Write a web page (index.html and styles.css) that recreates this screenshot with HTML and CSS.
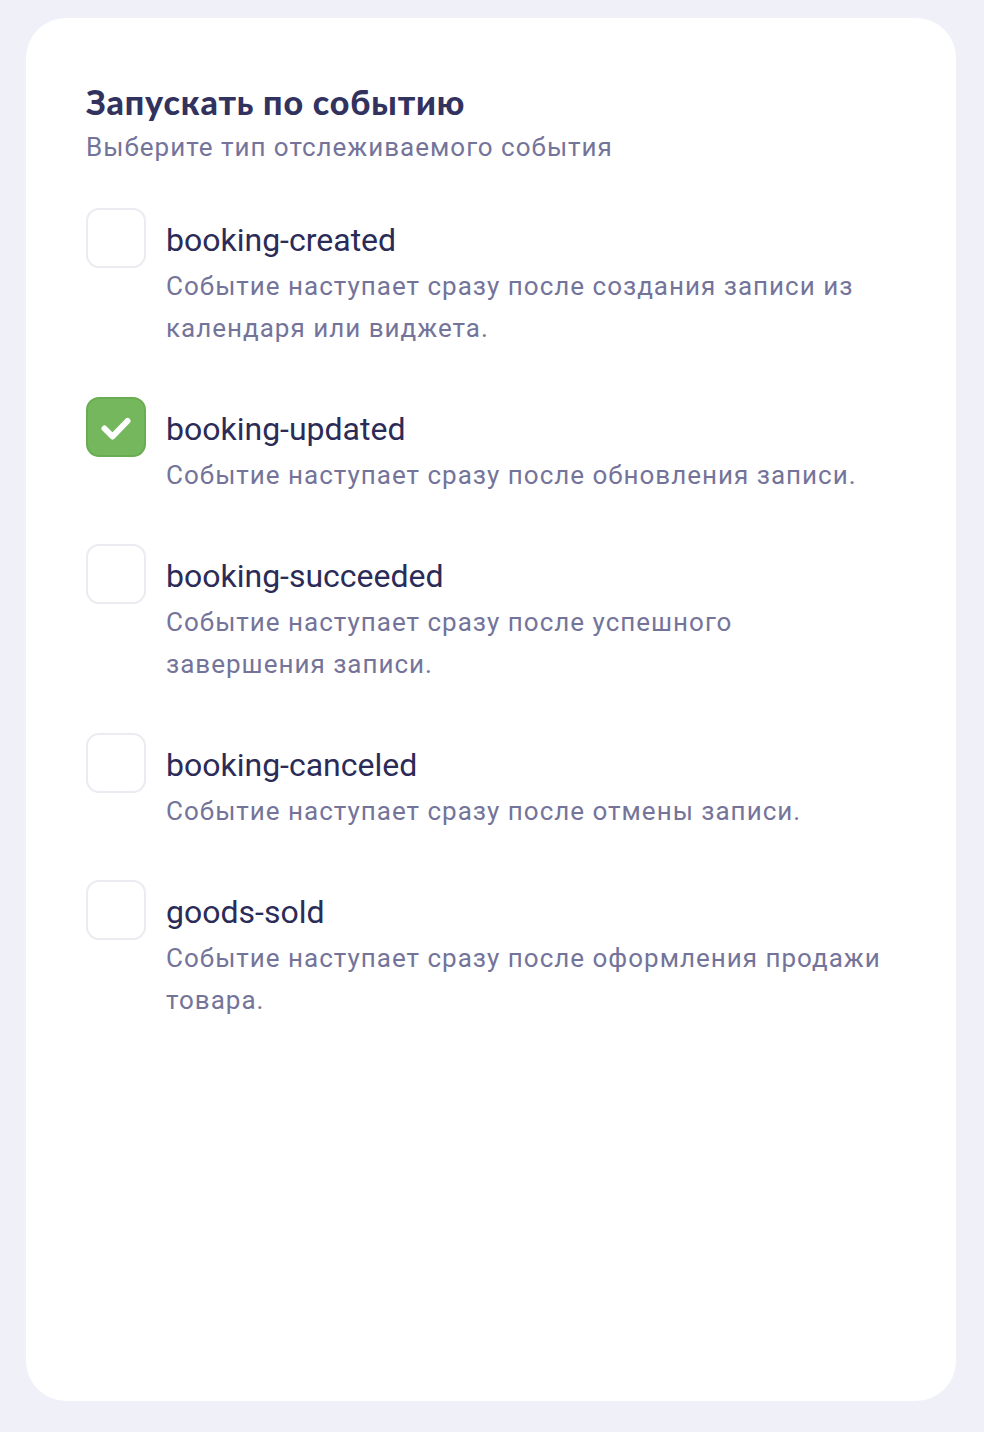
FILE: index.html
```html
<!DOCTYPE html>
<html lang="ru">
<head>
<meta charset="utf-8">
<link rel="stylesheet" href="styles.css">
</head>
<body>
<div class="page">
  <section class="card">
    <h1 class="title">Запускать по событию</h1>
    <p class="subtitle">Выберите тип отслеживаемого события</p>
    <ul class="events">
      <li class="event">
        <span class="box"></span>
        <div class="text">
          <div class="name">booking-created</div>
          <div class="desc">Событие наступает сразу после создания записи из календаря или виджета.</div>
        </div>
      </li>
      <li class="event">
        <span class="box checked">
          <svg viewBox="0 0 60 60" width="60" height="60"><path d="M18.5 31.5 L26.5 39.5 L41.5 24" fill="none" stroke="#fff" stroke-width="6" stroke-linecap="round" stroke-linejoin="round"/></svg>
        </span>
        <div class="text">
          <div class="name">booking-updated</div>
          <div class="desc">Событие наступает сразу после обновления записи.</div>
        </div>
      </li>
      <li class="event">
        <span class="box"></span>
        <div class="text">
          <div class="name">booking-succeeded</div>
          <div class="desc">Событие наступает сразу после успешного<br>завершения записи.</div>
        </div>
      </li>
      <li class="event">
        <span class="box"></span>
        <div class="text">
          <div class="name">booking-canceled</div>
          <div class="desc">Событие наступает сразу после отмены записи.</div>
        </div>
      </li>
      <li class="event">
        <span class="box"></span>
        <div class="text">
          <div class="name">goods-sold</div>
          <div class="desc">Событие наступает сразу после оформления продажи товара.</div>
        </div>
      </li>
    </ul>
  </section>
</div>
</body>
</html>
```
FILE: styles.css
```css
html, body {
  margin: 0;
  padding: 0;
  background: #f0f0f9;
}
.page {
  padding: 18px 28px 31px 26px;
  height: 1432px;
  box-sizing: border-box;
}
.card {
  background: #ffffff;
  border-radius: 40px;
  height: 100%;
  box-sizing: border-box;
  padding: 64px 60px 0 60px;
}
.title {
  margin: 0;
  font-family: "Lato", "Noto Sans", sans-serif;
  font-weight: 900;
  font-size: 34px;
  line-height: 40px;
  color: #32325f;
  letter-spacing: 0.85px;
}
.subtitle {
  margin: 8px 0 0 0;
  font-family: "Roboto", sans-serif;
  font-size: 26px;
  line-height: 34px;
  color: #74749a;
  letter-spacing: 1px;
}
.events {
  list-style: none;
  margin: 44px 0 0 0;
  padding: 0;
  display: flex;
  flex-direction: column;
  gap: 48px;
}
.event {
  display: flex;
  gap: 20px;
  align-items: flex-start;
}
.box {
  flex: none;
  width: 60px;
  height: 60px;
  box-sizing: border-box;
  border: 2px solid #ebebf2;
  border-radius: 13px;
  background: #fff;
  display: flex;
}
.box.checked {
  background: #74b75c;
  border-color: #6aac52;
}
.box svg {
  margin: -2px;
}
.text {
  font-family: "Roboto", sans-serif;
}
.name {
  margin-top: 10px;
  font-size: 32px;
  line-height: 44px;
  color: #2b2b58;
}
.desc {
  margin-top: 3px;
  font-size: 26px;
  line-height: 42px;
  color: #74749a;
  letter-spacing: 1px;
  max-width: 730px;
}
```
